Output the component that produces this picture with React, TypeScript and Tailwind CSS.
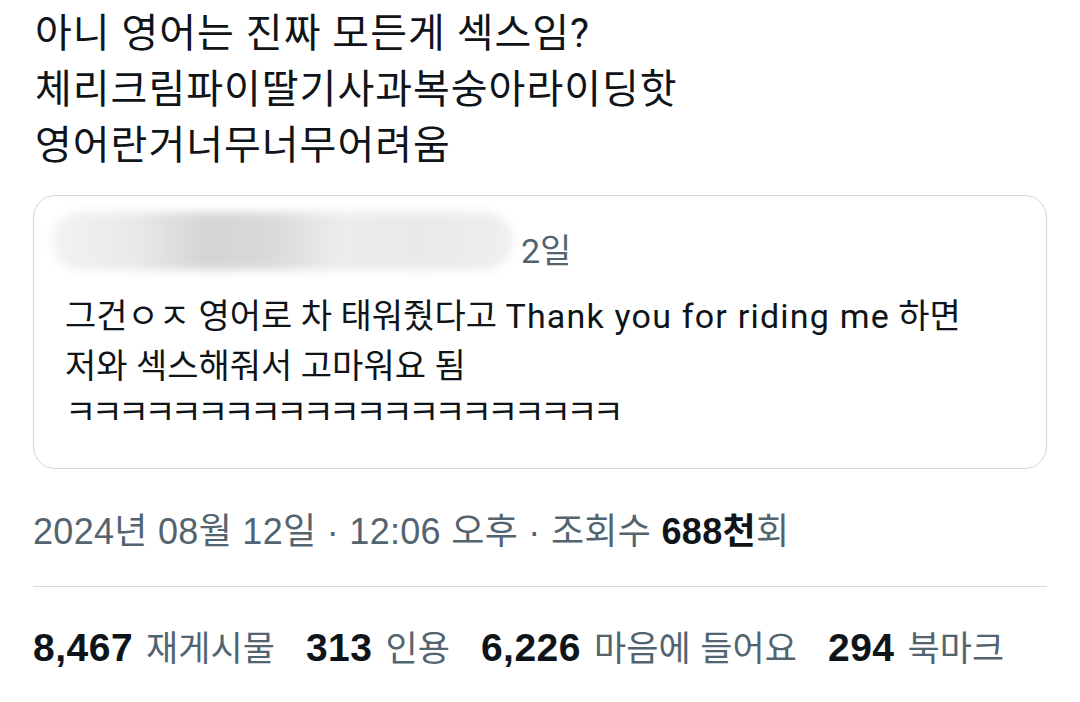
import React from 'react'

const font = { fontFamily: 'Roboto, "Noto Sans CJK KR", "Noto Sans", sans-serif' }
const arial = { fontFamily: '"Liberation Sans", "Noto Sans CJK KR", sans-serif' }

const Stat = ({ n, label }: { n: string; label: string }) => (
    <span className="whitespace-nowrap">
        <span className="font-bold text-[39px] tracking-[0.5px] text-[#0f1419]">{n}</span>
        <span className="text-[35px] text-[#536471] ml-[13px]">{label}</span>
    </span>
)

export default function App() {
    return (
        <div
            className="w-[1080px] h-[702px] bg-white overflow-hidden px-[33px] pt-[6px]"
            style={font}
        >
            {/* Tweet body */}
            <div className="text-[40px] leading-[56px] tracking-[1px] text-[#0f1419] pl-[2px]">
                <p>아니 영어는 진짜 모든게 섹스임?</p>
                <p>체리크림파이딸기사과복숭아라이딩핫</p>
                <p>영어란거너무너무어려움</p>
            </div>

            {/* Quoted tweet */}
            <div className="mt-[21px] h-[274px] border border-[#cfd9de] rounded-[22px] px-[31px] pt-[2px]">
                <div className="flex flex-row items-end h-[76px]">
                    <div className="relative w-[470px] h-[74px] -ml-[18px]">
                        <div className="absolute left-[4px] top-[12px] w-[462px] h-[58px] rounded-[30px] bg-[linear-gradient(90deg,#f3f3f3_0%,#e9e9e9_18%,#d3d4d6_34%,#d9dadc_48%,#ececed_62%,#e8e9ea_80%,#efefef_100%)] blur-[5px]" />
                    </div>
                    <span className="text-[34px] leading-[40px] text-[#536471] ml-[4px] mb-[3px]">
                        2일
                    </span>
                </div>
                <div className="text-[34px] leading-[50px] text-[#0f1419] mt-[17px]">
                    <p>
                        그건ㅇㅈ 영어로 차 태워줬다고{' '}
                        <span className="tracking-[1.2px]">Thank you for riding me</span> 하면
                    </p>
                    <p>저와 섹스해줘서 고마워요 됨</p>
                    <p className="tracking-[-4.9px] -mt-[4px]">ㅋㅋㅋㅋㅋㅋㅋㅋㅋㅋㅋㅋㅋㅋㅋㅋㅋㅋㅋㅋㅋ</p>
                </div>
            </div>

            {/* Timestamp */}
            <div
                className="mt-[41px] text-[36px] leading-[44px] tracking-[0.3px] text-[#536471]"
                style={arial}
            >
                2024년 08월 12일 · 12:06 오후 · 조회수{' '}
                <span className="font-bold text-[#0f1419]">688천</span>회
            </div>

            <div className="mt-[32px] h-px bg-[#cfd9de]" />

            {/* Stats */}
            <div
                className="mt-[39px] flex flex-row items-baseline gap-[31px] leading-[44px]"
                style={arial}
            >
                <Stat n="8,467" label="재게시물" />
                <Stat n="313" label="인용" />
                <Stat n="6,226" label="마음에 들어요" />
                <Stat n="294" label="북마크" />
            </div>
        </div>
    )
}
